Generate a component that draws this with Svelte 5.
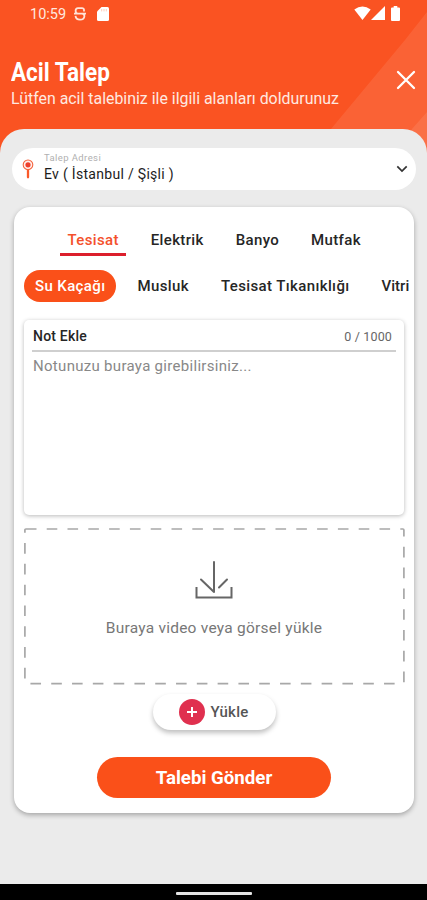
<script lang="ts">
	const tabs = ['Tesisat', 'Elektrik', 'Banyo', 'Mutfak'];
	const services = ['Su Kaçağı', 'Musluk', 'Tesisat Tıkanıklığı', 'Vitri'];
	const maxLength = 1000;

	let activeTab = $state('Tesisat');
	let activeService = $state('Su Kaçağı');
	let note = $state('');
</script>

<div class="screen">
	<header class="header">
		<svg class="header-shade" viewBox="0 0 427 160" aria-hidden="true">
			<path d="M427 12L405 40L331 129V160H427Z" fill="#fff" fill-opacity="0.09" />
			<path d="M427 112L412 129L400 160H427Z" fill="#fff" fill-opacity="0.09" />
		</svg>

		<div class="status-bar">
			<span class="clock">10:59</span>
			<svg class="status-s" width="12" height="14" viewBox="0 0 12 14" fill="none" stroke="#ffe3d8" stroke-width="1.8">
				<path d="M10 4.5V2.8Q10 1.2 8 1.2H4Q1.6 1.2 1.6 3.8Q1.6 6.6 4 6.6H8Q10.4 6.6 10.4 9.2Q10.2 12.6 6 12.6Q1.9 12.6 1.5 8.8M0 6.6H12" />
			</svg>
			<svg class="status-sd" width="12" height="14" viewBox="0 0 12 14">
				<path d="M4.5 0H10.5Q12 0 12 1.5V12.5Q12 14 10.5 14H1.5Q0 14 0 12.5V4.5Z" fill="#fff" />
				<path d="M4.7 2V4.4M7 2V4.4M9.3 2V4.4" stroke="#ffcbb8" />
			</svg>
			<div class="status-right">
				<svg width="17" height="14" viewBox="0 0 17 14">
					<path d="M8.5 14L0.3 3.4Q8.5 -2.6 16.7 3.4Z" fill="#fff" />
				</svg>
				<svg width="14" height="14" viewBox="0 0 14 14">
					<path d="M14 0V14H0Z" fill="#fff" />
				</svg>
				<svg class="battery" width="9" height="15" viewBox="0 0 9 15">
					<path d="M2.7 0H6.3V1.5H8Q9 1.5 9 2.5V14Q9 15 8 15H1Q0 15 0 14V2.5Q0 1.5 1 1.5H2.7Z" fill="#fff" />
				</svg>
			</div>
		</div>

		<div class="heading">
			<div>
				<h1>Acil Talep</h1>
				<p>Lütfen acil talebiniz ile ilgili alanları doldurunuz</p>
			</div>
			<button class="close-btn" aria-label="Kapat">
				<svg width="20" height="20" viewBox="0 0 20 20" fill="none" stroke="#fff" stroke-width="2.3" stroke-linecap="round">
					<path d="M2 2L18 18M18 2L2 18" />
				</svg>
			</button>
		</div>
	</header>

	<main class="sheet">
		<button class="address">
			<svg width="12" height="20" viewBox="0 0 12 20" fill="none">
				<path d="M6 11V18.3" stroke="#fa5a2a" stroke-width="2.3" stroke-linecap="round" />
				<circle cx="6" cy="5.8" r="4.8" fill="#fff0ec" stroke="#f5623c" stroke-width="1.1" />
				<circle cx="6" cy="5.8" r="2.6" fill="#ee3f2c" />
			</svg>
			<span class="address-text">
				<span class="address-label">Talep Adresi</span>
				<span class="address-value">Ev ( İstanbul / Şişli )</span>
			</span>
			<svg width="12" height="8" viewBox="0 0 12 8" fill="none" stroke="#333" stroke-width="1.7">
				<path d="M1.3 1.3L6 6L10.7 1.3" />
			</svg>
		</button>

		<section class="card">
			<nav class="tabs">
				{#each tabs as tab}
					<button class="tab" class:active={tab === activeTab} onclick={() => (activeTab = tab)}>
						<span>{tab}</span>
					</button>
				{/each}
			</nav>

			<div class="chips">
				{#each services as service}
					<button class="chip" class:active={service === activeService} onclick={() => (activeService = service)}>
						{service}
					</button>
				{/each}
			</div>

			<div class="note">
				<div class="note-head">
					<label for="note">Not Ekle</label>
					<span class="counter">{note.length} / {maxLength}</span>
				</div>
				<textarea id="note" bind:value={note} maxlength={maxLength} placeholder="Notunuzu buraya girebilirsiniz..."></textarea>
			</div>

			<div class="dropzone">
				<svg class="dashes" width="381" height="157" viewBox="0 0 381 157" aria-hidden="true">
					<rect x="0.9" y="1" width="379" height="154.7" rx="1" fill="none" stroke="#a8a8a8" stroke-width="1.7" stroke-dasharray="10.6 10.2" />
				</svg>
				<svg width="38" height="38" viewBox="0 0 38 38" fill="none" stroke="#666" stroke-width="2">
					<path d="M19 1V31M6 18.5L19 31M24 26.5L32 18.5" stroke-linecap="round" />
					<path d="M1.5 26V36.5H36.5V26" />
				</svg>
				<p>Buraya video veya görsel yükle</p>
			</div>

			<button class="upload">
				<span class="plus">
					<svg width="10" height="10" viewBox="0 0 10 10" stroke="#fff" stroke-width="2">
						<path d="M5 0V10M0 5H10" />
					</svg>
				</span>
				<span class="upload-label">Yükle</span>
			</button>

			<button class="submit">Talebi Gönder</button>
		</section>
	</main>

	<div class="nav-bar"><span></span></div>
</div>

<style>
	:global(body) {
		margin: 0;
	}

	.screen {
		width: 427px;
		height: 900px;
		display: flex;
		flex-direction: column;
		overflow: hidden;
		background: #fa5322;
		font-family: Roboto, 'Liberation Sans', sans-serif;
		color: #262626;
	}

	button {
		font: inherit;
		color: inherit;
		background: none;
		border: none;
		padding: 0;
		margin: 0;
	}

	svg {
		display: block;
		flex-shrink: 0;
	}

	.header {
		position: relative;
		height: 129px;
		flex-shrink: 0;
		color: #fff;
	}

	.header-shade {
		position: absolute;
		top: 0;
		left: 0;
		width: 427px;
		height: 160px;
	}

	.status-bar {
		position: relative;
		display: flex;
		align-items: center;
		height: 28px;
		padding: 0 27px 0 30px;
	}

	.clock {
		width: 36px;
		font-size: 14.5px;
		color: #ffe8df;
	}

	.status-s {
		margin-left: 8px;
	}

	.status-sd {
		margin-left: 11px;
	}

	.status-right {
		display: flex;
		align-items: center;
		margin: -2px 0 0 auto;
	}

	.battery {
		margin-left: 6px;
	}

	.heading {
		position: relative;
		display: flex;
		justify-content: space-between;
		padding: 28px 11px 0;
	}

	h1 {
		margin: 0;
		font-size: 26px;
		line-height: 32px;
		font-weight: 700;
		white-space: nowrap;
		transform: scaleX(0.865);
		transform-origin: left;
	}

	.heading p {
		margin: 0;
		font-size: 15.9px;
		line-height: 21px;
		white-space: nowrap;
		color: #ffe9e0;
	}

	.close-btn {
		align-self: flex-start;
		margin-top: 14px;
	}

	.sheet {
		position: relative;
		display: flex;
		flex-direction: column;
		flex: 1;
		padding: 19px 12px 0;
		background: #ebebeb;
		border-radius: 24px 24px 0 0;
	}

	.address {
		display: flex;
		align-items: center;
		width: 404px;
		height: 42px;
		padding: 0 8px 0 10px;
		box-sizing: border-box;
		background: #fff;
		border-radius: 21px;
		text-align: left;
	}

	.address-text {
		display: flex;
		flex-direction: column;
		flex: 1;
		margin: -2px 0 0 10px;
		white-space: nowrap;
	}

	.address-label {
		font-size: 9.5px;
		line-height: 12px;
		letter-spacing: 0.4px;
		color: #b0b0b0;
	}

	.address-value {
		font-size: 14px;
		line-height: 20px;
		letter-spacing: 0.3px;
		color: #1c1c1c;
	}

	.card {
		display: flex;
		flex-direction: column;
		align-items: center;
		width: 400px;
		height: 606px;
		margin: 17px 0 0 2px;
		padding: 0 10px;
		box-sizing: border-box;
		background: #fff;
		border-radius: 16px;
		box-shadow: 0 2px 5px rgba(0, 0, 0, 0.3);
	}

	.tabs {
		display: flex;
		align-self: flex-start;
		gap: 17.5px;
		padding: 23px 0 0 36px;
	}

	.tab {
		display: flex;
		height: 26px;
		padding: 0 7px 0 7.5px;
		box-sizing: border-box;
		border-bottom: 3px solid transparent;
		font-size: 15px;
		line-height: 20px;
		font-weight: 500;
		letter-spacing: 0.35px;
	}

	.tab.active {
		border-color: #dc1f2c;
		color: #f4512c;
	}

	.chips {
		display: flex;
		align-self: stretch;
		margin-top: 14px;
		margin-right: -6px;
	}

	.chip {
		flex-shrink: 0;
		height: 32px;
		margin-right: 10px;
		padding: 0 11px;
		border-radius: 16px;
		font-size: 15px;
		font-weight: 500;
		letter-spacing: 0.38px;
		white-space: nowrap;
	}

	.chip:last-child {
		margin-right: 0;
		padding-right: 0;
		letter-spacing: 0;
	}

	.chip.active {
		background: #fa5019;
		color: #fff;
	}

	.note {
		display: flex;
		flex-direction: column;
		align-self: stretch;
		height: 195px;
		margin-top: 18px;
		padding: 0 8px;
		box-sizing: border-box;
		border-radius: 5px;
		box-shadow: 0 1px 4px rgba(0, 0, 0, 0.28);
	}

	.note-head {
		display: flex;
		justify-content: space-between;
		align-items: center;
		height: 32px;
		padding: 2px 4px 0 1px;
		box-sizing: border-box;
		border-bottom: 2px solid #cfcfcf;
		font-size: 14px;
		font-weight: 500;
		letter-spacing: 0.2px;
	}

	.counter {
		font-size: 12.5px;
		font-weight: 400;
		letter-spacing: 0.15px;
		color: #666;
	}

	textarea {
		flex: 1;
		padding: 4px 1px;
		border: none;
		outline: none;
		resize: none;
		background: none;
		font: 15px/20px Roboto, 'Liberation Sans', sans-serif;
		letter-spacing: 0.3px;
	}

	textarea::placeholder {
		color: #888;
	}

	.dropzone {
		position: relative;
		display: flex;
		flex-direction: column;
		align-items: center;
		align-self: stretch;
		height: 157px;
		margin-top: 13px;
		padding-top: 33px;
		box-sizing: border-box;
	}

	.dashes {
		position: absolute;
		top: 0;
		left: 0;
	}

	.dropzone p {
		margin: 19px 0 0;
		font-size: 15.5px;
		line-height: 20px;
		letter-spacing: 0.24px;
		color: #777;
	}

	.upload {
		display: flex;
		align-items: center;
		width: 123px;
		height: 36px;
		margin-top: 9px;
		padding-left: 26px;
		box-sizing: border-box;
		border-radius: 18px;
		background: #fff;
		box-shadow: 0 3px 5px rgba(0, 0, 0, 0.25);
	}

	.plus {
		display: flex;
		align-items: center;
		justify-content: center;
		width: 26px;
		height: 26px;
		border-radius: 50%;
		background: #e0304f;
	}

	.upload-label {
		margin-left: 6px;
		font-size: 15px;
		font-weight: 500;
		letter-spacing: 0.2px;
		color: #555;
	}

	.submit {
		width: 234px;
		height: 41px;
		margin-top: 27px;
		border-radius: 21px;
		background: #fa5019;
		color: #fff;
		font-size: 18.7px;
		font-weight: 700;
	}

	.nav-bar {
		display: flex;
		justify-content: center;
		height: 16px;
		flex-shrink: 0;
		background: #000;
	}

	.nav-bar span {
		width: 76px;
		height: 3px;
		margin-top: 8px;
		border-radius: 1px;
		background: #e4e4e4;
	}
</style>
